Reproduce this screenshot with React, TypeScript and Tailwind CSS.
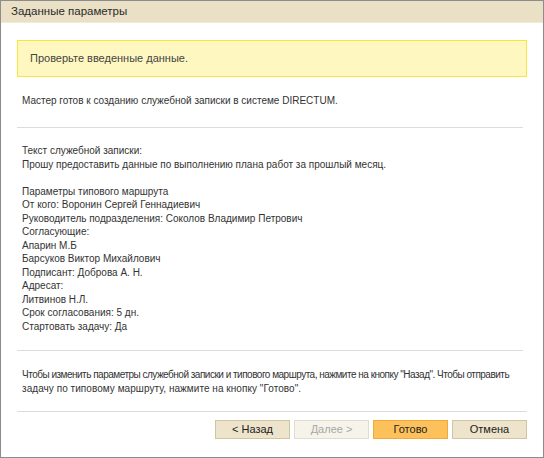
export default function App() {
  // Строки с параметрами маршрута
  const lines = [
    'Текст служебной записки:',
    'Прошу предоставить данные по выполнению плана работ за прошлый месяц.',
    '',
    'Параметры типового маршрута',
    'От кого: Воронин Сергей Геннадиевич',
    'Руководитель подразделения: Соколов Владимир Петрович',
    'Согласующие:',
    'Апарин М.Б',
    'Барсуков Виктор Михайлович',
    'Подписант: Доброва А. Н.',
    'Адресат:',
    'Литвинов Н.Л.',
    'Срок согласования: 5 дн.',
    'Стартовать задачу: Да',
  ];

  return (
    <div
      className="w-[544px] h-[458px] border border-[#8c8c8c] bg-white flex flex-col text-[#333] overflow-hidden"
      style={{ fontFamily: '"Liberation Sans", Arial, sans-serif' }}
    >
      <div className="h-[22px] shrink-0 bg-[#e9e0c5] border-b border-[#f0ead8] flex items-center pl-[10px] text-[11.5px] text-[#2a2a2a]">
        Заданные параметры
      </div>

      <div className="pl-[16px] pr-[16px] flex flex-col">
        <div className="mt-[17px] h-[37px] bg-[#fef8c0] border border-[#f7e43c] flex items-center pl-[12px] text-[11px] text-[#444]">
          Проверьте введенные данные.
        </div>

        <div className="mt-[17px] pl-[5px] text-[10px] leading-[14px]">
          Мастер готов к созданию служебной записки в системе DIRECTUM.
        </div>

        <div className="mt-[19px] mr-[4px] h-px bg-[#dcdcdc]" />

        <div className="mt-[16px] pl-[5px] text-[10px] leading-[13.5px]">
          {lines.map((line, i) => (
            <div key={i} className="h-[13.5px]">
              {line}
            </div>
          ))}
        </div>

        <div className="mt-[17px] mr-[4px] h-px bg-[#dcdcdc]" />

        <div className="mt-[17px] pl-[5px] text-[10px] leading-[14px] whitespace-nowrap">
          <div className="tracking-[-0.5px]">
            Чтобы изменить параметры служебной записки и типового маршрута, нажмите на кнопку "Назад". Чтобы отправить
          </div>
          <div className="tracking-[0.05px]">задачу по типовому маршруту, нажмите на кнопку "Готово".</div>
        </div>

        <div className="mt-[15px] h-px bg-[#dcdcdc]" />

        <div className="mt-[8px] flex justify-end gap-[4px] text-[11px]">
          <button className="w-[75px] h-[19px] bg-[#ede4cb] border border-[#cfc4a4] text-[#222] flex items-center justify-center">
            &lt; Назад
          </button>
          <button
            disabled
            className="w-[75px] h-[19px] bg-[#f6f3ea] border border-[#e3ddcc] text-[#a8a8a8] flex items-center justify-center"
          >
            Далее &gt;
          </button>
          <button className="w-[75px] h-[19px] bg-[#fdc15c] border border-[#f2a937] text-[#222] flex items-center justify-center">
            Готово
          </button>
          <button className="w-[75px] h-[19px] bg-[#ede4cb] border border-[#cfc4a4] text-[#222] flex items-center justify-center">
            Отмена
          </button>
        </div>
      </div>
    </div>
  );
}
